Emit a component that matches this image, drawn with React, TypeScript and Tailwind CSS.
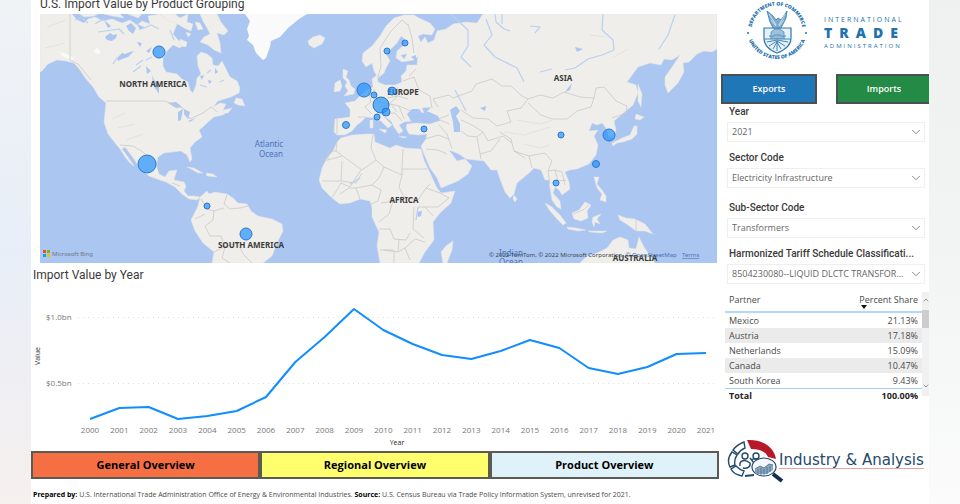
import React, { useState } from "react";
import { ChevronDown, ChevronUp } from "lucide-react";

const bubbles = [
  { x: 159, y: 52, r: 6 },
  { x: 147, y: 164, r: 9 },
  { x: 207, y: 206, r: 3 },
  { x: 246, y: 234, r: 6 },
  { x: 364, y: 90, r: 7 },
  { x: 374, y: 95, r: 3 },
  { x: 381, y: 105, r: 8 },
  { x: 386, y: 112, r: 4 },
  { x: 377, y: 117, r: 3 },
  { x: 346, y: 125, r: 3.5 },
  { x: 387, y: 51, r: 3 },
  { x: 405, y: 43, r: 3 },
  { x: 392, y: 91, r: 4 },
  { x: 424, y: 129, r: 3 },
  { x: 561, y: 135, r: 3 },
  { x: 609, y: 135, r: 6 },
  { x: 596, y: 164, r: 3.5 },
  { x: 556, y: 183, r: 3 },
];

const land = [
  // North and Central America
  "M40 14H72L77 20 84 23 88 19 95 17 103 21 112 19 122 23 130 20 137 25 142 21 150 24 148 16 160 14 164 17 170 16 178 22 175 29 173 34 178 40 184 44 180 48 173 45 167 51 163 58 163 66 166 72 177 74 182 79 188 82 190 90 193 93 196 85 197 78 201 74 198 66 197 56 201 52 207 54 212 58 213 65 218 66 222 61 226 69 230 77 237 81 240 88 239 93 231 97 218 101 213 107 220 103 226 104 223 110 230 110 223 115 214 117 208 122 203 127 199 130 202 137 195 142 190 148 192 159 190 162 187 155 181 151 172 152 164 153 158 157 156 165 159 174 165 177 169 171 177 170 175 176 174 180 184 182 186 186 184 191 188 196 194 196 200 197 197 200 189 199 182 194 175 187 166 182 157 179 149 176 140 169 136 162 131 155 125 147 122 149 128 157 134 166 130 163 125 157 120 149 115 143 108 134 104 122 105 112 106 103 99 97 93 87 86 79 80 70 74 63 66 61 57 60 48 64 42 71 40 72Z",
  // South America
  "M200 197L207 191 209 194 215 192 227 194 233 198 238 203 247 204 251 211 258 216 272 219 282 224 283 231 277 243 272 256 263 263H212L214 252 203 243 195 231 191 220 195 212 198 206Z",
  // Baffin and the arctic islands
  "M200 14L217 14 221 22 228 31 224 35 217 33 220 43 221 53 214 50 208 45 200 42 204 37 210 34 207 28 203 21Z",
  "M180 39L187 42 186 47 180 46ZM195 22L200 23 203 29 198 30ZM186 32L191 34 188 37ZM161 14H175L180 18 188 14 187 22 193 24 191 31 184 28 176 23 168 21Z",
  "M80 14H98L94 16 84 17ZM104 14H120L124 18 112 16ZM128 14H142L138 18Z",
  // Newfoundland and the Caribbean
  "M236 98L242 99 245 106 238 105 234 103ZM224 110L232 108 228 113 223 113Z",
  "M187 167L194 168 203 173 198 173 191 169ZM206 173L213 174 217 177 207 176Z",
  // Iceland, British Isles
  "M308 41L313 37 320 35 325 38 322 44 314 48 309 45Z",
  "M343 69L348 71 346 77 349 80 351 86 355 89 354 94 344 96 348 91 345 86 347 82 343 78ZM335 83L340 80 342 86 340 91 334 92Z",
  // Scandinavia and Finland
  "M363 53L372 46 380 36 386 26 394 18 404 15 414 15 419 18 430 23 435 29 432 35 423 34 418 36 422 45 420 54 414 60 402 62 396 58 397 51 404 45 405 39 401 36 397 43 392 48 386 54 390 61 386 68 384 73 378 78 374 71 372 63 366 67 362 61Z",
  // Eurasia
  "M418 53L420 43 425 37 428 43 434 40 437 31 446 29 453 24 466 22 477 23 483 14H717V49L712 52 704 51 697 54 689 62 683 63 684 72 678 83 668 93 665 85 665 77 672 67 680 55 672 60 664 59 661 65 650 63 638 67 627 82 636 85 638 93 633 105 621 115 614 121 616 130 614 137 609 137 606 128 602 123 597 125 592 123 589 131 598 130 594 136 598 145 596 155 589 164 577 169 570 170 565 172 569 182 570 189 562 195 559 190 555 187 553 193 560 201 561 209 557 207 552 200 550 188 549 180 545 180 541 170 534 168 529 173 517 183 514 194 510 198 505 192 500 179 497 170 491 170 484 161 466 159 459 154 449 150 457 161 465 159 472 166 468 174 458 181 441 188 437 178 430 168 424 154 421 146 426 139 427 134 418 135 409 134 406 128 407 124 416 123 430 124 439 121 436 116 427 112 431 107 422 108 424 113 417 113 411 114 412 121 404 122 399 125 403 131 399 134 394 127 391 121 385 117 381 114 388 121 392 125 388 128 381 121 374 118 366 117 361 122 357 125 352 131 345 135 337 135 334 132 335 119 350 117 350 109 345 103 355 101 360 96 367 90 373 87 372 79 377 75 378 82 385 85 395 85 402 82 401 76 406 71 407 65 417 65Z",
  // Africa
  "M337 142L341 138 352 135 366 134 374 134 375 142 390 148 396 145 405 148 421 149 424 160 431 175 437 188 441 193 455 191 451 203 440 213 433 222 434 240 425 252 419 263H380L377 246 379 232 372 217 372 208 370 201 360 199 350 203 340 204 332 198 322 188 319 180 322 168 327 158 333 151Z",
  "M453 241L452 250 447 263H443L441 252 446 246Z",
  // Mediterranean islands
  "M370 120L373 120 373 128 370 128ZM379 129L387 130 385 133ZM399 136L407 137 403 138Z",
  // South and south east Asia
  "M514 195L517 199 515 202 513 199Z",
  "M545 203L552 207 560 215 566 223 563 225 557 219 550 211ZM567 227L576 228 586 230 578 231 568 229ZM588 231L607 231 602 233 590 232Z",
  "M572 213L579 210 585 202 591 205 587 211 588 218 581 221 574 219Z",
  "M593 217L601 214 597 219 600 224 595 222 594 227 592 222Z",
  "M594 177L599 177 597 184 602 190 606 196 606 202 600 200 602 194 597 188Z",
  "M618 215L626 218 635 219 645 224 653 234 645 231 636 231 628 225 620 220Z",
  "M580 263L586 257 597 253 607 248 613 240 620 237 628 240 629 248 636 249 639 237 644 247 651 257 655 263Z",
  // Japan and Sakhalin
  "M637 126L637 134 632 139 623 142 617 143 613 146 612 143 622 138 630 135 634 126ZM636 114L644 117 640 120 635 119ZM638 84L642 94 641 107 638 101Z",
];

const lakes = [
  "M450 110L456 106 460 111 456 116 460 124 460 132 454 132 453 122Z",
  "M407 114L412 109 419 109 422 113 429 112 438 116 440 121 430 121 418 119 411 121Z",
  "M168 103L176 102 182 107 176 108ZM178 112L183 109 181 120 178 121ZM184 109L190 112 188 119 184 114ZM188 121L196 118 190 122Z",
  "M480 108L486 106 485 111ZM565 92L572 83 570 90ZM417 212L422 211 421 216 418 217Z",
  "M105 37L110 33 113 35 117 34 116 38 112 41 107 40ZM117 58L122 53 125 54 130 52 134 51 128 57 122 59 118 61ZM152 75L154 80 159 84 159 94 155 88 153 82Z",
  "M126 26L131 23 136 28 133 34 129 31ZM137 24L144 27 140 30ZM104 20L111 26 108 28ZM137 42L142 43 140 47ZM146 51L152 47 149 53ZM146 66L151 71 147 74ZM200 76L204 75 202 80ZM215 68L218 72 215 74ZM208 80L212 81 209 84Z",
  "M575 47L583 49 577 52ZM401 55L407 54 404 59ZM411 57L416 55 416 61Z",
];

const borders = [
  "M70 14V60L78 64 91 80M106 101H165L183 108 190 119 203 113 211 107 217 112M120 145L133 146 143 152 150 159M172 183L180 186M201 199L207 209 214 211 213 220 205 226 210 236 221 236 225 247 222 258 230 263M195 219L205 214M227 195L224 204 230 209 240 208 248 206M213 211L224 208M214 252L224 247M225 247L237 243 244 255 252 263",
  "M337 142L336 151H328V160H321M336 151L362 170 376 160 371 148 373 134M328 160L342 156M342 161L341 181H322M341 181L356 183 362 173M361 170L350 187 341 183 332 198M340 194L349 188 356 188 360 199M356 188L372 185 381 190 378 201 371 204M376 160L384 167 379 178 372 185M384 167L402 175V169L403 149M402 169H428M402 175L399 187 404 197 418 200 426 188 430 184M426 188L440 193 449 198 438 207 425 207M404 197L393 201 381 203M393 201L389 214 379 222M379 229H390L394 239 406 240 410 233M414 207L413 229 424 238M418 207H425L433 216M399 239L398 252 384 250M398 252L405 248 415 239 425 242M380 250H394V263M405 248L410 260",
  "M378 77L381 66 380 48 391 31 402 20 408 25M408 24L412 38 414 53M403 81L414 77 419 90 430 96 432 108M416 69L409 76M397 87L397 97 389 104 378 101 374 89M368 90L371 102 365 107 372 114M358 117L366 117M381 107L391 104 399 106 411 111M384 114L395 113 402 121M391 104L397 112M399 106L404 119M337 119V134M387 98L398 96 408 99",
  "M438 107L433 99 449 95 453 98 472 91 476 84 492 79 502 86 511 86 522 96 528 99 521 108 507 111 511 122 497 126 488 119 473 118 461 110M449 115L438 119 449 124M461 120L472 125 483 132 488 141 503 136 512 143M439 125L447 134 452 149M425 139L438 135 449 139M426 149L438 150 447 154M477 137L481 159M483 132L477 137 468 136 461 131M480 154L491 151 500 139",
  "M528 99L540 95 553 98 564 92 580 97 594 98 591 107 577 111 567 119 552 119 541 115 528 103M594 98L596 88 604 87 616 101 627 106 626 113 612 118M500 132L511 139 514 151 529 156 545 153 552 161 548 171 555 170 562 172 565 185M529 156L532 168M514 151L525 158M555 170L558 181 566 180M548 171L550 184M573 214L583 210 589 205M636 219V231",
];

const rivers = [
  "M495 14L496 22 504 29 510 31M502 14V24M452 15L468 30 468 46 461 57 471 67M486 19L492 35 484 45 495 57 517 68 524 82M603 14L602 30 613 40 614 50 602 55 588 59 575 68 565 70M540 72L552 69M675 15L668 35 659 49M530 26L540 27 535 33M75 20L82 18 88 23M95 24L105 18M98 32L119 29 124 34M142 29L151 25 159 29M113 64L117 58M133 72L141 66M136 65L143 60M146 60L152 57M170 30L174 40M200 85L207 87M220 82L224 80M207 73L211 70M418 207L416 220M466 111L455 90M350 184L360 178",
];

const CommerceMap = () => (
  <svg viewBox="40 14 677 249" className="block w-full" role="img" aria-label="Import value map">
    <rect x="40" y="14" width="677" height="249" fill="#abc6f1" />
    <g fill="#efeeea" stroke="#e3e4e2" strokeWidth="0.5">
      {land.map((d) => (
        <path key={d} d={d} />
      ))}
    </g>
    <path
      d="M245 14L250 21 247 29 249 36 247 40 253 45 256 53 263 60 266 58 270 47 271 41 280 37 288 28 299 19 307 14Z"
      fill="#fafafa"
    />
    <path d="M94 52L97 47 99 50 101 53 97 54ZM60 52L67 54 75 59 71 60 62 56Z" fill="#fafafa" />
    <g fill="#abc6f1">
      {lakes.map((d) => (
        <path key={d} d={d} />
      ))}
    </g>
    <g fill="none" stroke="#cbc9c5" strokeWidth="0.8" strokeLinejoin="round">
      {borders.map((d) => (
        <path key={d} d={d} />
      ))}
    </g>
    <g fill="none" stroke="#b9d0f1" strokeWidth="1.2" strokeLinejoin="round">
      {rivers.map((d) => (
        <path key={d} d={d} />
      ))}
    </g>
    <path
      d="M47 27L66 20M45 48L65 43M112 119L125 113M118 128L135 124M126 140L143 134M504 132L524 135 550 127M517 120L540 124 553 120M524 144L540 148 550 145M590 35L606 37M612 58L628 49"
      fill="none"
      stroke="#e4e2de"
      strokeWidth="1"
    />
    <g className="font-['Noto_Sans',sans-serif] text-[8px] font-bold" fill="#3b3b3b" textAnchor="middle">
      <text x="153" y="87">NORTH AMERICA</text>
      <text x="251" y="248">SOUTH AMERICA</text>
      <text x="403" y="95">EUROPE</text>
      <text x="404" y="203">AFRICA</text>
      <text x="563" y="81">ASIA</text>
      <text x="635" y="261">AUSTRALIA</text>
    </g>
    <g className="font-['Noto_Sans',sans-serif] text-[8px]" fill="#4a74b4" textAnchor="middle">
      <text x="269" y="147">Atlantic</text>
      <text x="271" y="157">Ocean</text>
      <text x="511" y="256">Indian</text>
      <text x="511" y="265">Ocean</text>
    </g>
    <g fill="#1e8fff" fillOpacity="0.68" stroke="#2b78cc" strokeWidth="1">
      {bubbles.map((b) => (
        <circle key={`${b.x}-${b.y}`} cx={b.x} cy={b.y} r={b.r} />
      ))}
    </g>
    <rect x="43" y="250" width="3" height="3" fill="#f25022" />
    <rect x="47" y="250" width="3" height="3" fill="#7fba00" />
    <rect x="43" y="254" width="3" height="3" fill="#00a4ef" />
    <rect x="47" y="254" width="3" height="3" fill="#ffb900" />
    <g className="font-['Noto_Sans',sans-serif] text-[6px]">
      <text x="52" y="256" fill="#6d7687">Microsoft Bing</text>
      <text x="489" y="257" fill="#3f444c">
        © 2022 TomTom, © 2022 Microsoft Corporation, <tspan fill="#4a74b4">© OpenStreetMap</tspan>
      </text>
      <text x="682" y="257" fill="#4a74b4" textDecoration="underline">Terms</text>
    </g>
  </svg>
);

const values = [
  { year: 2000, y: 419 },
  { year: 2001, y: 408 },
  { year: 2002, y: 407 },
  { year: 2003, y: 419 },
  { year: 2004, y: 416 },
  { year: 2005, y: 411 },
  { year: 2006, y: 397 },
  { year: 2007, y: 362 },
  { year: 2008, y: 337 },
  { year: 2009, y: 309 },
  { year: 2010, y: 330 },
  { year: 2011, y: 344 },
  { year: 2012, y: 355 },
  { year: 2013, y: 359 },
  { year: 2014, y: 351 },
  { year: 2015, y: 340 },
  { year: 2016, y: 348 },
  { year: 2017, y: 368 },
  { year: 2018, y: 374 },
  { year: 2019, y: 367 },
  { year: 2020, y: 354 },
  { year: 2021, y: 353 },
];

const yearX = (i: number) => 90 + (i * 616) / 21;

const ValueChart = () => (
  <svg
    viewBox="31 283 690 168"
    className="block w-full font-['Open_Sans',sans-serif]"
    role="img"
    aria-label="Import value by year"
  >
    <g stroke="#dcdcdc" strokeWidth="1" strokeDasharray="1 4">
      <path d="M78 317.5H718" />
      <path d="M78 383.5H718" />
    </g>
    <g className="text-[8px]" fill="#777777">
      <text x="46" y="320">$1.0bn</text>
      <text x="46" y="386">$0.5bn</text>
      {values.map((v, i) => (
        <text key={v.year} x={yearX(i)} y="433" textAnchor="middle">
          {v.year}
        </text>
      ))}
    </g>
    <g className="text-[7px]" fill="#252423" textAnchor="middle">
      <text x="397" y="445">Year</text>
      <text x="40" y="356" transform="rotate(-90 40 356)">Value</text>
    </g>
    <polyline
      points={values.map((v, i) => `${yearX(i)},${v.y}`).join(" ")}
      fill="none"
      stroke="#118dff"
      strokeWidth="2"
      strokeLinejoin="round"
    />
  </svg>
);

const tabs = [
  { label: "General Overview", color: "bg-[#f66f43]" },
  { label: "Regional Overview", color: "bg-[#ffff6e]" },
  { label: "Product Overview", color: "bg-[#e0f2f9]" },
];

const filters = [
  { id: "year", label: "Year", value: "2021", space: "" },
  { id: "sector", label: "Sector Code", value: "Electricity Infrastructure", space: "mt-2" },
  { id: "sub-sector", label: "Sub-Sector Code", value: "Transformers", space: "mt-3" },
  {
    id: "hts",
    label: "Harmonized Tariff Schedule Classificati...",
    value: "8504230080--LIQUID DLCTC TRANSFOR...",
    space: "mt-2",
  },
];

const partners = [
  { name: "Mexico", share: "21.13%" },
  { name: "Austria", share: "17.18%" },
  { name: "Netherlands", share: "15.09%" },
  { name: "Canada", share: "10.47%" },
  { name: "South Korea", share: "9.43%" },
];

const CommerceSeal = () => (
  <svg viewBox="0 0 64 64" className="size-16 shrink-0" role="img" aria-label="Department of Commerce">
    <defs>
      <path id="seal-top" d="M7 36A25.5 25.5 0 1 1 57 36" />
      <path id="seal-bottom" d="M2 34A30.5 30.5 0 0 0 62 34" />
    </defs>
    <g className="font-['Open_Sans',sans-serif] text-[5px] font-extrabold" fill="#2372ac" textAnchor="middle">
      <text>
        <textPath href="#seal-top" startOffset="50%">DEPARTMENT OF COMMERCE</textPath>
      </text>
      <text>
        <textPath href="#seal-bottom" startOffset="50%">UNITED STATES OF AMERICA</textPath>
      </text>
    </g>
    <path
      d="M19 28H46V38C46 45 40 50 32 53 24 50 19 45 19 38Z"
      fill="#e6f0f7"
      stroke="#2f79b0"
      strokeWidth="1.2"
    />
    <g fill="none" stroke="#2f79b0" strokeWidth="0.9">
      <path d="M20 39H45M32 41V51M22 42L32 40 43 42M24 46L32 41 40 46M28 49L32 42 36 49" />
      <path d="M24 36H41M28 33H37M25 38H40" />
    </g>
    <path d="M26 37V32L30 29 35 29 39 32V37L35 35H30Z" fill="#9dc1dc" stroke="#2f79b0" strokeWidth="0.6" />
    <path
      d="M22 11L28 16 31 20 33 18 36 20 42 11 41 18 38 24 36 28H28L25 22Z"
      fill="#7fadd0"
      stroke="#2f79b0"
      strokeWidth="0.8"
    />
    <path d="M24 14L31 25M26 20L31 26M40 14L34 25M39 20L34 26" stroke="#ffffff" strokeWidth="0.6" />
    <circle cx="3" cy="33" r="1" fill="#2372ac" />
    <circle cx="61" cy="33" r="1" fill="#2372ac" />
  </svg>
);

const AnalysisMark = () => (
  <svg viewBox="0 0 58 44" className="h-11 w-[58px] shrink-0" aria-hidden="true">
    <g fill="none" stroke="#24496b" strokeWidth="1.4">
      <path d="M17 3C12 5 8 8 6 11L11 15C13 12 15 10 18 9Z" />
      <path d="M5 13C1 18 1 24 3 28L8 26C7 22 8 19 10 16Z" />
      <path d="M4 30C6 34 10 36 15 37L17 32C13 31 11 29 9 27Z" />
      <path d="M18 37L27 36" strokeWidth="2" />
      <circle cx="18" cy="17" r="3" />
      <circle cx="29" cy="17" r="3" />
      <path d="M13 27C12 21 18 20 23 24 24 28 20 30 16 29M24 21C27 19 32 20 34 22M23 19L27 24" />
    </g>
    <path d="M20 1C34 0 47 7 49 20L41 18C39 13 33 10 24 10Z" fill="#b9182b" />
    <ellipse cx="37" cy="28" rx="12" ry="9" fill="#f3f7fa" stroke="#24496b" strokeWidth="1.2" />
    <path d="M28 34V30L33 27 37 29 42 25 46 26V31L40 35H32Z" fill="#8aa6bd" />
    <path
      d="M28 30L33 27 37 29 42 25 46 26M31 30V35M34 29V36M37 30V36M40 28V35M43 27V33"
      stroke="#45698a"
      strokeWidth="0.8"
      fill="none"
    />
    <path d="M46 35L55 42" stroke="#102f50" strokeWidth="4" />
  </svg>
);

const App = () => {
  const [activeTab, setActiveTab] = useState("Product Overview");

  return (
    <div className="flex min-h-screen overflow-hidden bg-white font-['Open_Sans',sans-serif] text-[#252423]">
      <div className="w-[31px] shrink-0 bg-linear-to-b from-[#f0f3f6] via-[#e8eef8] to-[#f6f0ee]" />

      <main className="flex min-w-0 flex-1 overflow-hidden">
        <section className="min-w-0 flex-1">
          <div className="-mt-1 pr-1 pl-[9px]">
            <h2 className="mb-0.5 font-['Roboto',sans-serif] text-[12px] leading-4 text-[#3b3a39]">
              U.S. Import Value by Product Grouping
            </h2>
            <CommerceMap />
          </div>
          <h2 className="mt-1 pl-0.5 font-['Roboto',sans-serif] text-[12px] leading-4 text-[#3b3a39]">
            Import Value by Year
          </h2>
          <ValueChart />

          <nav className="mr-0.5 grid grid-cols-3">
            {tabs.map((tab) => (
              <button
                key={tab.label}
                type="button"
                aria-pressed={activeTab === tab.label}
                onClick={() => setActiveTab(tab.label)}
                className={`h-7 border-2 border-[#5c5a55] text-[11px] font-bold text-black ${tab.color}`}
              >
                {tab.label}
              </button>
            ))}
          </nav>
          <p className="mt-2 pl-0.5 text-[7px] leading-4 whitespace-nowrap text-[#4a4a4a]">
            <b className="text-black">Prepared by:</b> U.S. International Trade Administration Office of Energy &amp;
            Environmental Industries. <b className="text-black">Source:</b> U.S. Census Bureau via Trade Policy
            Information System, unrevised for 2021.
          </p>
        </section>

        <aside className="flex w-52 shrink-0 flex-col overflow-hidden">
          <div className="flex h-[74px] items-start pl-6">
            <CommerceSeal />
            <div className="flex flex-col pt-4 pl-[15px] text-[#2372ac]">
              <span className="text-[7px] leading-2 tracking-[2px]">INTERNATIONAL</span>
              <span className="text-[14px] leading-[18px] font-extrabold tracking-[7px]">TRADE</span>
              <span className="text-[6px] leading-2 tracking-[2px]">ADMINISTRATION</span>
            </div>
          </div>

          <div className="flex gap-[19px]">
            <button
              type="button"
              className="h-[30px] w-24 shrink-0 border-2 border-[#4b5054] bg-[#1f77b8] text-[9px] font-semibold text-white"
            >
              Exports
            </button>
            <button
              type="button"
              className="h-[30px] w-24 shrink-0 border-2 border-[#4b5054] bg-[#238b45] text-[9px] font-semibold text-white"
            >
              Imports
            </button>
          </div>

          <div className="pr-1 pl-1.5">
            {filters.map((filter) => (
              <div key={filter.id} className={filter.space}>
                <label
                  htmlFor={filter.id}
                  className="mb-0.5 block pl-0.5 font-['Roboto',sans-serif] text-[10px] leading-4 font-medium whitespace-nowrap text-[#3b3a39]"
                >
                  {filter.label}
                </label>
                <div className="relative">
                  <select
                    id={filter.id}
                    className="block h-5 w-full appearance-none border border-[#efefef] bg-white pl-1 text-[9px] text-[#666666]"
                  >
                    <option>{filter.value}</option>
                  </select>
                  <ChevronDown
                    className="pointer-events-none absolute top-[3px] right-0.5 size-3.5 text-[#777777]"
                    strokeWidth={1.5}
                  />
                </div>
              </div>
            ))}
          </div>

          <div className="mt-2 flex pl-1">
            <table className="flex-1 border-collapse text-[9px] leading-[15px] text-[#4a4a4a]">
              <thead>
                <tr className="h-5 border-b-2 border-[#b3d8fa] align-top">
                  <th className="pl-1 text-left font-normal">Partner</th>
                  <th className="relative pr-1 text-right font-normal">
                    Percent Share
                    <svg viewBox="0 0 6 4" className="absolute right-[55px] bottom-0.5 h-1 w-1.5" aria-hidden="true">
                      <path d="M0 0H6L3 4Z" fill="#111111" />
                    </svg>
                  </th>
                </tr>
              </thead>
              <tbody>
                {partners.map((partner) => (
                  <tr key={partner.name} className="even:bg-[#ecebeb]">
                    <td className="pl-1">{partner.name}</td>
                    <td className="pr-1 text-right">{partner.share}</td>
                  </tr>
                ))}
              </tbody>
              <tfoot>
                <tr className="border-t border-[#9dcdf8] leading-[13px] font-bold text-[#252423]">
                  <td className="pl-1">Total</td>
                  <td className="pr-1 text-right">100.00%</td>
                </tr>
              </tfoot>
            </table>
            <div className="mb-1.5 flex w-[7px] flex-col items-center bg-[#f1f1f1]">
              <ChevronUp className="mt-1 size-2 text-[#666666]" />
              <div className="mt-1.5 h-[18px] w-full bg-[#cdcdcd]" />
              <ChevronDown className="mt-auto mb-1.5 size-2 text-[#666666]" />
            </div>
          </div>

          <div className="mt-[37px] flex items-center pl-1.5">
            <AnalysisMark />
            <span className="-ml-1.5 border-b border-[#e9a3a3] font-['DejaVu_Sans',sans-serif] text-[15px] leading-[15px] whitespace-nowrap text-[#24496b]">
              Industry &amp; Analysis
            </span>
          </div>
        </aside>
      </main>

      <div className="w-[31px] shrink-0 bg-linear-to-b from-[#eff1f1] via-[#f2f4f4] to-[#fbfbfb]" />
    </div>
  );
};

export default App;
